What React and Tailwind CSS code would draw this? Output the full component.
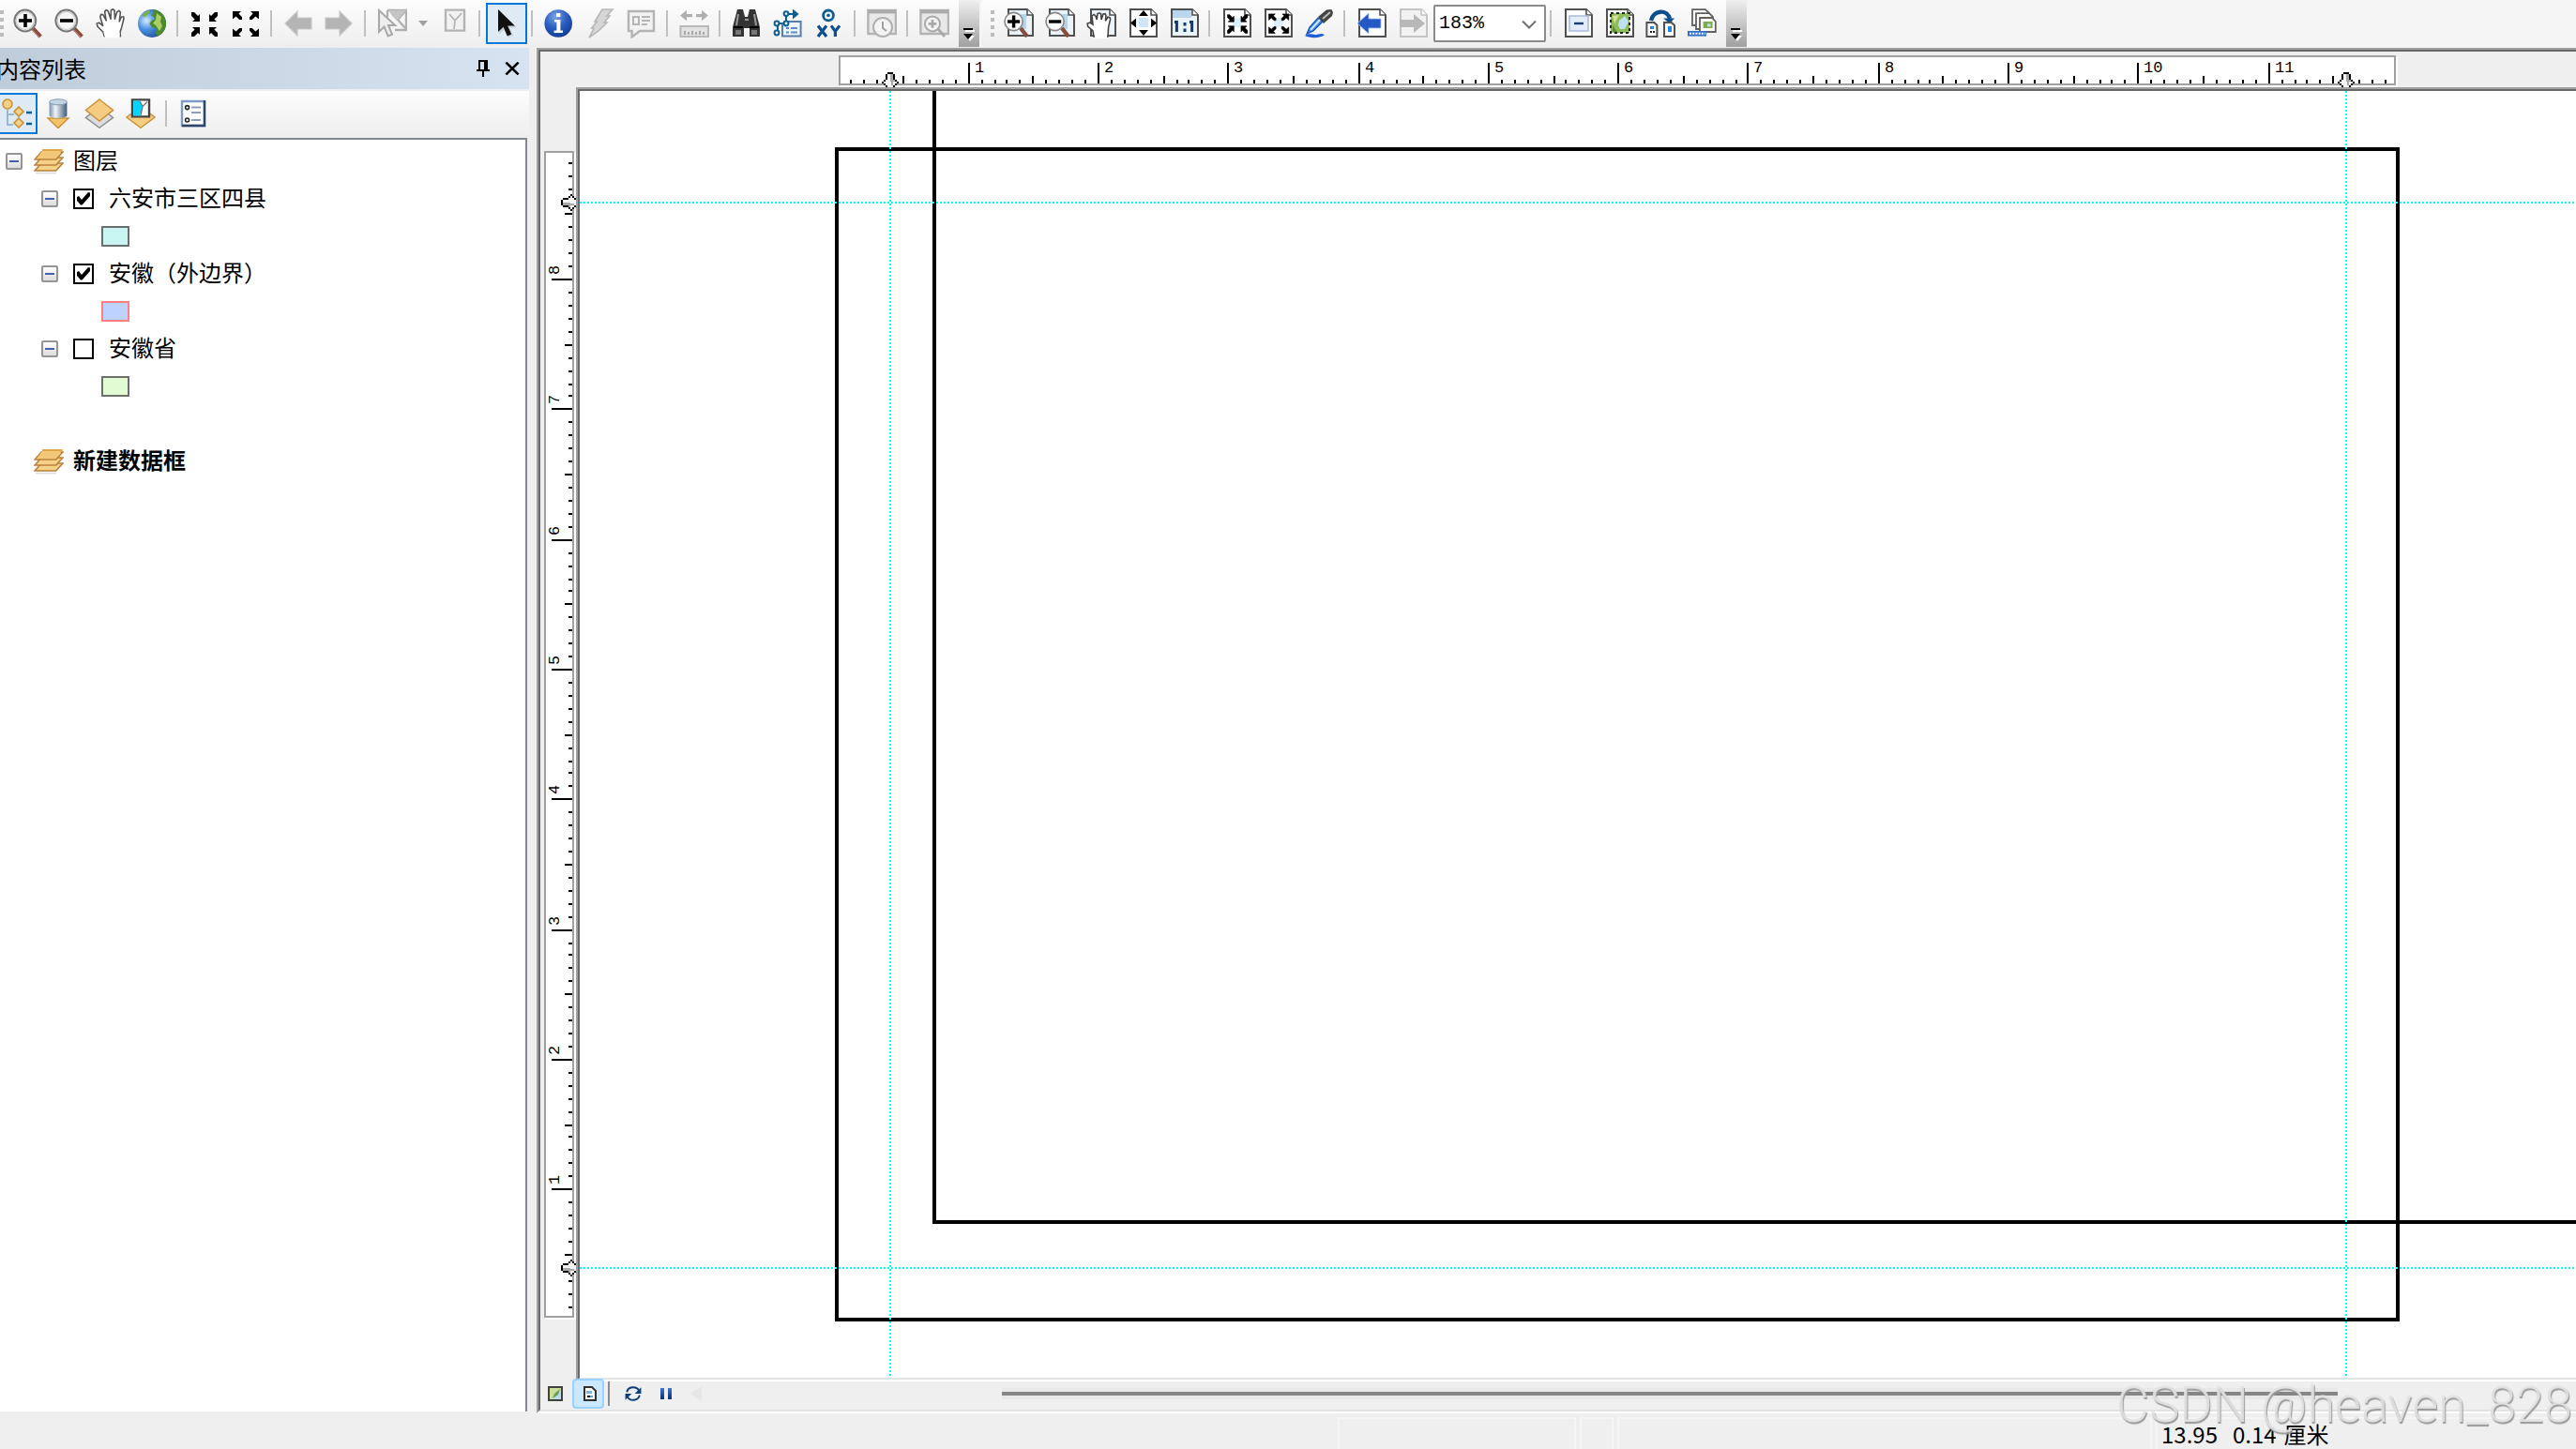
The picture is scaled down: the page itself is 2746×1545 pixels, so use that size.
import { useState } from "react";
import clsx from "clsx";

/* ---------- toolbar icons, all on a 16 x 16 grid ---------- */

const Svg = ({ children, className = "w-8 h-8" }) => (
  <svg viewBox="0 0 16 16" className={clsx("block shrink-0", className)} fill="none" aria-hidden="true">
    {children}
  </svg>
);

const Magnifier = ({ plus }) => (
  <Svg>
    <path d="M10.6 10.8 14.6 15" stroke="#8a4a3c" strokeWidth="2.2" />
    <path d="M10.4 11.6 13.8 15.2" stroke="#c08878" strokeWidth=".6" />
    <circle cx="6.4" cy="6.5" r="5.7" fill="#f6f6f6" stroke="#777" strokeWidth="1" />
    <circle cx="6.4" cy="6.5" r="4.8" stroke="#ccc" strokeWidth=".6" />
    <path d="M3 6.5h7" stroke="#000" strokeWidth="1.8" />
    {plus && <path d="M6.5 3v7" stroke="#000" strokeWidth="1.8" />}
  </Svg>
);

const HAND =
  "M4.6 14.8 4 12.6 1 9.6.6 8l1.2-.4 2 1.6L2.4 4.4l.4-1.2 1.2.2L5.6 6.4 4.8 1.6l.8-.8 1 .6L8 5.6 8.2 1 9 .4l1 .6.2 4.6 1.2-3.8 1-.6.8.8-.6 5 1-2.4 1.2-.2.2 1-1.2 4.8-.8 2.4.2 2.2z";

const Hand = () => (
  <Svg>
    <path d={HAND} fill="#fff" stroke="#555" strokeWidth=".8" strokeLinejoin="round" />
    <path d="M4.2 12.6h8.6v3H5z" fill="#fff" />
  </Svg>
);

const Globe = () => (
  <Svg>
    <defs>
      <radialGradient id="sea" cx=".3" cy=".4" r=".8">
        <stop offset="0" stopColor="#d6ecff" />
        <stop offset=".4" stopColor="#4a90e0" />
        <stop offset="1" stopColor="#123c86" />
      </radialGradient>
    </defs>
    <circle cx="8" cy="8" r="7.5" fill="url(#sea)" />
    <path
      d="M8.500.5c4 .3 7 3.500 7 7.500 0 3-1.700 5.600-4.500 6.800L10 13.500l.6-2.700L8 10l-1.300-2L8 6.200l1.600-.4L9 4.500 7.500 3.800 9 2.500z"
      fill="#4f8a2a"
    />
    <path d="M10.500 2.500 13 4.500l-.5 2.500 1 2.500-1.500 2.500-2-3-1.500-1 1.500-2z" fill="#a9cf62" />
    <path d="M2.500 3.800 5 1.400l2-.6-.5 1.700L4 4.800z" fill="#7cb04a" />
  </Svg>
);

const IN_ARROWS =
  "M1 2h1.500l2 2 1-1V7H1.500l1.300-1.300L1 4zM15 2h-1.500l-2 2-1-1V7h4l-1.300-1.300L15 4zM1 15h1.500l2-2 1 1v-4H1.500l1.300 1.300L1 13zM15 15h-1.500l-2-2-1 1v-4h4l-1.300 1.300L15 13z";
const OUT_ARROWS =
  "M1 1.500h4.500L4.200 2.800 6 4.600V6H4.600L2.800 4.200 1 5.800zM15 1.500h-4.500l1.300 1.300L10 4.600V6h1.400l1.800-1.800L15 5.800zM1 15h4.500l-1.300-1.300L6 11.900v-1.400H4.600l-1.800 1.800L1 10.700zM15 15h-4.500l1.300-1.300-1.800-1.800v-1.400h1.400l1.800 1.800 1.800-1.600z";

const FixedZoomIn = () => (
  <Svg>
    <path d={IN_ARROWS} fill="#000" />
  </Svg>
);

const FixedZoomOut = () => (
  <Svg>
    <path d={OUT_ARROWS} fill="#000" />
  </Svg>
);

const GreyArrow = ({ flip }) => (
  <Svg>
    <path
      d={flip ? "M14.500 8 8 1.500V5H.5v6H8v3.500z" : "M1 8l6.500-6.500V5H15v6H7.500v3.500z"}
      fill="#b4b4b4"
      stroke="#c8c8c8"
      strokeWidth=".6"
    />
  </Svg>
);

const SelectFeatures = () => (
  <Svg>
    <path d="M5.500 1h10v10.500h-6M5.500 1v3.500M15 1.500l-4 4.500 4 4.500" stroke="#b0b0b0" strokeWidth="1.200" />
    <path d="M6 1h9.500L10.500 6.500 8 4z" fill="#c4c4c4" />
    <path d="M1 1v11.500l2.800-2.700 2 4.900 2.200-.9-2-4.800h3.600z" fill="#eee" stroke="#a8a8a8" />
  </Svg>
);

const ClearSelection = () => (
  <Svg>
    <path d="M3.500.800h10v11h-10z" fill="#f2f2f2" stroke="#b4b4b4" strokeWidth="1.200" />
    <path d="M5.500 3l3 3.500L8 11M8.500 6.500 12 2.500" stroke="#b4b4b4" strokeWidth=".9" />
  </Svg>
);

const Pointer = () => (
  <Svg>
    <path d="M4 1v12.800l3-2.700 2 4.500 2.600-1.200-2-4.200h4z" fill="#c9d3dc" />
    <path d="M3.500.500v12l2.800-2.600 2.100 4.800 2.200-1-2-4.400h3.800z" fill="#111" />
  </Svg>
);

const Info = () => (
  <Svg>
    <defs>
      <radialGradient id="info" cx=".4" cy=".25" r=".8">
        <stop offset="0" stopColor="#7fa6e6" />
        <stop offset=".5" stopColor="#2a5ec0" />
        <stop offset="1" stopColor="#123a90" />
      </radialGradient>
    </defs>
    <circle cx="7.600" cy="8" r="7.400" fill="url(#info)" />
    <path d="M6.500 2.500h2.200v2H6.500zM5.500 6h3.200v5.800H10V13H5.300v-1.200h1.400V7.200H5.500z" fill="#fff" />
  </Svg>
);

const Lightning = () => (
  <Svg>
    <path d="M9 .500h5.500L11.500 4H13l-3 3.500h1.500L7 12l-5 3.500 2.500-5H3.300l3-3.500H5z" fill="#d6d6d6" stroke="#b8b8b8" strokeWidth=".8" />
  </Svg>
);

const HtmlPopup = () => (
  <Svg>
    <path d="M1 1.500h13.500v10.500H7l-4.200 3.200V12H1z" fill="#f2f2f2" stroke="#b4b4b4" strokeWidth="1.200" />
    <path d="M3.500 4.500h3v4h-3zM8 4.500h4.500M8 6.500h4.500M8 8.500h3" stroke="#b4b4b4" />
  </Svg>
);

const Measure = () => (
  <Svg>
    <path d="M.5 3.800 4 1v2h3v1.600H4v2zM15.500 3.800 12 1v2H9v1.600h3v2z" fill="#b0b0b0" />
    <path d="M.7 9.500h14.800v5.500H.7z" fill="#e2e2e2" stroke="#b8b8b8" />
    <path d="M3 14v-2M5 14v-1.500M7 14v-2M9 14v-1.500M11 14v-2M13 14v-1.500" stroke="#999" strokeWidth=".8" />
  </Svg>
);

const Binoculars = () => (
  <Svg>
    <path d="M3 .500h3l1 4h1.500l1-4h3L15 10v5H9.500v-4.500h-3V15H.5v-5z" fill="#333" />
    <path d="M3.500 3 2.500 9M12 3l1 6M7 6h2" stroke="#999" />
    <path d="M2 11.500h3v2.500H2zM10.500 11.500h3v2.500h-3z" fill="#777" />
    <path d="M1 10h5M9.500 10h5" stroke="#000" />
  </Svg>
);

const FindRoute = () => (
  <Svg>
    <path d="M2.500 13.500V8h4.500V3h5" stroke="#0b5f95" />
    <path d="M10.500 .300 13.800 3l-3.300 2.700z" fill="#0b5f95" />
    <g fill="#fff" stroke="#0b5f95">
      <circle cx="2" cy="8" r="1.200" />
      <circle cx="2" cy="13" r="1.200" />
      <circle cx="7" cy="2.800" r="1.200" />
    </g>
    <path d="M5 14.800V8.500h3V7h6.800v7.800z" fill="#eef4fc" stroke="#5a7ca8" />
    <circle cx="7" cy="8" r="1.200" fill="#fff" stroke="#0b5f95" />
    <path d="M7 10.500h1.500M9.500 10.500H13M7 12.800h1.500M9.500 12.800H13" stroke="#5a8ad0" />
  </Svg>
);

const GoToXY = () => (
  <Svg>
    <circle cx="7.500" cy="3.700" r="2.700" fill="#fff" stroke="#0b5f95" strokeWidth="1.400" />
    <circle cx="7.500" cy="3.700" r=".9" fill="#0b5f95" />
    <path d="M2 9.200 6.500 15M6.500 9.200 2 15M9 9.200l2.200 3 2.300-3M11.200 12v3" stroke="#0b4f8c" strokeWidth="1.600" />
  </Svg>
);

const WindowFrame = () => (
  <>
    <path d="M.7 1h14.800v12.500H.7z" fill="#e8e8e8" stroke="#b4b4b4" strokeWidth="1.200" />
    <path d="M.7 1.800h14.800" stroke="#aaa" strokeWidth="1.800" />
  </>
);

const TimeSlider = () => (
  <Svg>
    <WindowFrame />
    <circle cx="8.500" cy="10" r="5" fill="#f4f4f4" stroke="#b0b0b0" />
    <path d="M8.500 7v3.500l2 1.500" stroke="#a0a0a0" />
  </Svg>
);

const ViewerWindow = () => (
  <Svg>
    <WindowFrame />
    <circle cx="7" cy="8.200" r="4" fill="#f4f4f4" stroke="#aaa" />
    <path d="M7 6v4.400M4.800 8.200h4.400M10 11l3.500 4" stroke="#aaa" strokeWidth="1.400" />
  </Svg>
);

/* sheet of paper with a folded corner, shared by the layout tools */
const Sheet = ({ stroke = "#505050", fill = "#fff" }) => (
  <>
    <path d="M1.500.500h11l3 3V15h-14z" fill={fill} stroke={stroke} />
    <path d="M12.500.500v3h3" fill="#fff" stroke={stroke} strokeWidth=".8" />
  </>
);

const LayoutMagnifier = ({ plus }) => (
  <Svg>
    <path d="M2.500.500h10l3 3V14.500h-13z" fill="#eaf3fa" stroke="#505050" />
    <path d="M12.500.500v3h3" fill="#fff" stroke="#505050" strokeWidth=".8" />
    <path d="M9 3h3v8H9z" fill="#b4d6ec" />
    <path d="M9 10.500 12.500 15" stroke="#8a4a3c" strokeWidth="2.200" />
    <circle cx="5.300" cy="7" r="4.800" fill="#fafafa" stroke="#888" strokeWidth=".8" />
    <path d="M2 7h6.600" stroke="#000" strokeWidth="1.700" />
    {plus && <path d="M5.300 3.700v6.600" stroke="#000" strokeWidth="1.700" />}
  </Svg>
);

const LayoutPan = () => (
  <Svg>
    <path d="M2.500.500h10l3 3V14.500h-13z" fill="#eaf3fa" stroke="#505050" />
    <path d="M12.500.500v3h3" fill="#fff" stroke="#505050" strokeWidth=".8" />
    <path
      d="M4 15 3.500 12 .8 9.500.6 8 2 7.600l1.500 1L3 4l1-.8L5 4l.6 2L6 2.800l1-.4.8.6.2 3L9 3l1-.2.5 1-.3 2.800 1.300-2 1 .2.300 1-1 4.200-.3 5z"
      fill="#fff"
      stroke="#444"
      strokeWidth=".8"
    />
    <path d="M4.500 12h6.500v4H4.500z" fill="#fff" />
  </Svg>
);

const WholePage = () => (
  <Svg>
    <Sheet />
    <path d="M6 5h5v5H6z" fill="#cfe6f8" />
    <path d="M8.500 1 11 4H6zM8.500 14.500 11 11.500H6zM1.500 7.800l3-2.500v5zM15.500 7.800l-3-2.500v5z" fill="#000" />
  </Svg>
);

const ActualSize = () => (
  <Svg>
    <Sheet fill="#eaf3fa" />
    <path d="M2 1h10v4H2z" fill="#b9d6ee" />
    <path d="M4.200 6.500v6M3 7.200h1.500M12.300 6.500v6M11 7.200h1.500M8.500 7.500v1.700M8.500 10.800v1.700" stroke="#123c70" strokeWidth="1.500" />
  </Svg>
);

const LayoutFixed = ({ out }) => (
  <Svg>
    <Sheet />
    <path d="M6 5h5v5H6z" fill="#dceefa" />
    <g transform="translate(2.500 1.800) scale(.76)">
      <path d={out ? OUT_ARROWS : IN_ARROWS} fill="#000" stroke="#000" strokeWidth=".4" />
    </g>
  </Svg>
);

const Brush = () => (
  <Svg>
    <path d="M.5 14.500c2.500-1.500 4-.5 5.500-.5s3-1.200 5 0c-2 2-8 2-10.500.5z" fill="#1f5fd6" />
    <path d="M1.500 13.500 3 10l4.500-5L10 7l-5 5z" fill="#3a8ae8" stroke="#1b4fb0" strokeWidth=".6" />
    <path d="M3.500 11.500 8.500 6" stroke="#cfe6ff" />
    <path d="M7.500 4.500 12 .8l2.600-.3.900 1.500-.5 2L10.500 8z" fill="#444" />
    <path d="M10 5.500 14 2" stroke="#bbb" />
  </Svg>
);

const ExtentArrow = ({ forward }) => (
  <Svg>
    <Sheet stroke={forward ? "#c4c4c4" : "#505050"} fill={forward ? "#f2f2f2" : "#fff"} />
    {forward ? (
      <path d="M14.500 8 8.500 3v3H1v4h7.500v3z" fill="#b8b8b8" />
    ) : (
      <path d="M.5 8l6-5.500v3h6.500v5H6.500v3z" fill="#2458c4" stroke="#a8c4f0" strokeWidth=".4" />
    )}
  </Svg>
);

const DraftMode = () => (
  <Svg>
    <Sheet />
    <path d="M3.500 4h10v8h-10z" fill="#e2ecfa" stroke="#a9bcd8" strokeWidth=".8" />
    <path d="M6 8h5" stroke="#1c3e78" strokeWidth="1.200" />
  </Svg>
);

const FocusFrame = () => (
  <Svg>
    <Sheet />
    <path d="M3.500 2.500h10v10.500h-10z" fill="#8fbc5c" stroke="#222" strokeDasharray="1.500 1.500" />
    <path d="M8 6.500l3-2.500 2 3-2 4H8.500l-1-2z" fill="#bfe0ee" />
    <path d="M4.500 4 8 3.500 5.500 8z" fill="#d2e49a" />
    <path d="M4.500 9 7 12.500H4.500z" fill="#5f8f38" />
  </Svg>
);

const ChangeLayout = () => (
  <Svg>
    <path d="M3 6.500C4 1 11.500 0 13 5.500" stroke="#0b4f8c" strokeWidth="2.200" />
    <path d="M9.500 5.200h6L13 8z" fill="#0b4f8c" />
    <path d="M.7 7.500h4l1.500 1.500v6H.7zM10 7.500h3.800L15.500 9v6H10z" fill="#fff" stroke="#505050" />
    <path d="M2.500 9.500h2V11h-2zM12 9.500h2v3h-2z" fill="#1f86e8" />
    <path d="M2.500 12.500h1M4 12.500h1" stroke="#222" />
  </Svg>
);

const DataDrivenPages = () => (
  <Svg>
    <path d="M3 .600h7l2 2V9H3z" fill="#fff" stroke="#606060" strokeWidth=".9" />
    <path d="M5 2.600h7l2 2V11H5z" fill="#fff" stroke="#606060" strokeWidth=".9" />
    <path d="M7 5h6.500L15.400 7v5.500H7z" fill="#fff" stroke="#606060" strokeWidth=".9" />
    <path d="M8.800 7h5v3.500h-5z" fill="#7fae4c" />
    <path d="M11 8.200h1.800v1.500H11z" fill="#bfe0ee" />
    <path d="M.5 12h10v2.800H.5z" fill="#2f6fd0" />
    <path d="M1.500 13.400h8.500" stroke="#fff" strokeDasharray="1 .6" />
  </Svg>
);

const ListByDrawingOrder = () => (
  <Svg>
    <path d="M3 6v8h3M3 8.500h3.500" stroke="#9ab6d0" />
    <g fill="#f7d083" stroke="#c8913c" strokeWidth=".8">
      <circle cx="3" cy="3" r="2.500" />
      <path d="M9 4.500 11.500 7 9 9.500 6.500 7zM9 10.500l2.500 2.500L9 15.500 6.500 13z" />
    </g>
    <path d="M13 7.500h3M13 13.500h3" stroke="#0b5f95" strokeWidth="1.200" />
  </Svg>
);

const ListBySource = () => (
  <Svg>
    <defs>
      <linearGradient id="drum">
        <stop offset="0" stopColor="#7990ad" />
        <stop offset=".35" stopColor="#f0f5fa" />
        <stop offset="1" stopColor="#3f5878" />
      </linearGradient>
    </defs>
    <path d="M2.500 10.500h11L8 15.800z" fill="#f3c566" stroke="#c8913c" strokeWidth=".7" />
    <path d="M3.300 1.800v7.400c1 1.500 8.400 1.500 9.400 0V1.800z" fill="url(#drum)" />
    <ellipse cx="8" cy="1.900" rx="4.700" ry="1.500" fill="#c5d4e4" stroke="#8199b4" strokeWidth=".5" />
  </Svg>
);

const ListByVisibility = () => (
  <Svg>
    <path d="M8 4.500 15.300 10.200 8 15.600.7 10.200z" fill="#ddd" stroke="#8c8c8c" strokeWidth=".7" />
    <path d="M8 .500 15.300 6.200 8 12 .7 6.200z" fill="#f6cd80" stroke="#c8913c" strokeWidth=".7" />
  </Svg>
);

const ListBySelection = () => (
  <Svg>
    <path d="M8 4.500 15.500 10 8 15.600.5 10z" fill="#f6cd80" stroke="#c8913c" strokeWidth=".7" />
    <path d="M3.500.700h9v9h-9z" fill="#fff" stroke="#444" strokeWidth="1.200" />
    <path d="M4.100 1.300h3.400l1.500 2.900-1.500 4.900H4.100z" fill="#00d5ff" />
    <path d="M7.500 1.500 9 4.200 8 9M9 4.200l2.500-2.500" stroke="#777" strokeWidth=".7" />
  </Svg>
);

const Options = () => (
  <Svg>
    <path d="M2 1.500h12v13H2z" fill="#fff" stroke="#7f9bc6" strokeWidth="1.200" />
    <path d="M14 1v13.500H2" stroke="#2e4468" strokeWidth="1.200" />
    <circle cx="4.800" cy="4.800" r="1" stroke="#222" strokeWidth=".8" />
    <circle cx="4.800" cy="11.500" r="1" stroke="#222" strokeWidth=".8" />
    <path d="M7 4.800h5M7 7.500h5M7 11.500h5" stroke="#8c9fba" />
  </Svg>
);

const Layers = () => (
  <Svg>
    {[13, 10, 7].map((y) => (
      <path
        key={y}
        d={`M.6 ${y} 4 ${y - 4}h11.500L11.800 ${y}z`}
        fill="#f6d187"
        stroke="#b9803c"
        strokeWidth=".8"
      />
    ))}
    <path d="M1.600 6.500 5 1.800h10.300L11.800 6.500z" fill="#f2c878" />
    <path d="M4.500 2h10.800" stroke="#d79c3c" strokeWidth=".8" />
    <path d="M1 14.300h11" stroke="#ddd" strokeWidth=".8" />
  </Svg>
);

/* ---------- toolbar parts ---------- */

const ToolButton = ({ label, icon, active }) => (
  <button
    type="button"
    aria-label={label}
    className={clsx(
      "flex h-11 w-11 shrink-0 items-center justify-center",
      active && "border-2 border-[#0078d7] bg-[#deebf5]"
    )}
  >
    {icon}
  </button>
);

const Separator = () => <div className="mr-1.5 ml-1 h-7 w-0.5 shrink-0 bg-[#c0c0c0]" />;

const Grip = () => (
  <div className="flex shrink-0 flex-col gap-1">
    {[0, 1, 2, 3].map((i) => (
      <span key={i} className="block h-1 w-1 bg-[#bdbdbd]" />
    ))}
  </div>
);

const Overflow = () => (
  <button
    type="button"
    aria-label="Toolbar options"
    className="ml-1 flex w-[22px] shrink-0 items-end justify-center self-stretch bg-linear-to-b from-[#f0f0f0] to-[#a0a0a0] pb-1.5"
  >
    <svg viewBox="0 0 6 7" className="h-3.5 w-3" aria-hidden="true">
      <path d="M1 1h5v1H1zM1 4h5L3.500 7z" fill="#fff" />
      <path d="M0 0h5v1H0zM0 3h5L2.500 6z" fill="#000" />
    </svg>
  </button>
);

const Tools = ({ items }) =>
  items.map((item, i) =>
    item === "|" ? (
      <Separator key={i} />
    ) : (
      <ToolButton key={i} label={item[0]} icon={item[1]} active={item[2]} />
    )
  );

const navTools = [
  ["Zoom in", <Magnifier plus />],
  ["Zoom out", <Magnifier />],
  ["Pan", <Hand />],
  ["Full extent", <Globe />],
  "|",
  ["Fixed zoom in", <FixedZoomIn />],
  ["Fixed zoom out", <FixedZoomOut />],
  "|",
  ["Previous extent", <GreyArrow />],
  ["Next extent", <GreyArrow flip />],
  "|",
  ["Select features", <SelectFeatures />],
];

const queryTools = [
  ["Clear selection", <ClearSelection />],
  "|",
  ["Select elements", <Pointer />, true],
  "|",
  ["Identify", <Info />],
  ["Hyperlink", <Lightning />],
  ["HTML popup", <HtmlPopup />],
  "|",
  ["Measure", <Measure />],
  "|",
  ["Find", <Binoculars />],
  ["Find route", <FindRoute />],
  ["Go to XY", <GoToXY />],
  "|",
  ["Time slider", <TimeSlider />],
  "|",
  ["Viewer window", <ViewerWindow />],
];

const layoutTools = [
  ["Layout zoom in", <LayoutMagnifier plus />],
  ["Layout zoom out", <LayoutMagnifier />],
  ["Layout pan", <LayoutPan />],
  ["Whole page", <WholePage />],
  ["Actual size", <ActualSize />],
  "|",
  ["Layout fixed zoom in", <LayoutFixed />],
  ["Layout fixed zoom out", <LayoutFixed out />],
  ["Brush", <Brush />],
  "|",
  ["Back", <ExtentArrow />],
  ["Forward", <ExtentArrow forward />],
];

const pageTools = [
  "|",
  ["Draft mode", <DraftMode />],
  ["Focus data frame", <FocusFrame />],
  ["Change layout", <ChangeLayout />],
  ["Data driven pages", <DataDrivenPages />],
];

function ToolbarRow() {
  return (
    <div className="flex h-[51px] shrink-0 bg-[#f5f5f5]">
      <div className="flex items-center bg-linear-to-b from-[#fdfdfd] to-[#eeeeee] pb-px">
        <div className="mr-1">
          <Grip />
        </div>
        <Tools items={navTools} />
        <button type="button" aria-label="Select by" className="flex w-[22px] shrink-0 justify-center">
          <svg viewBox="0 0 10 6" className="h-1.5 w-2.5" aria-hidden="true">
            <path d="M0 0h10L5 6z" fill="#a0a0a0" />
          </svg>
        </button>
        <Tools items={queryTools} />
        <Overflow />
      </div>
      <div className="ml-0.5 flex items-center rounded-l bg-linear-to-b from-[#fdfdfd] to-[#eeeeee] pb-px pl-2.5">
        <div className="mr-1">
          <Grip />
        </div>
        <Tools items={layoutTools} />
        <div className="relative w-[120px] shrink-0">
          <select
            aria-label="Zoom"
            defaultValue="183%"
            className="block h-10 w-full appearance-none rounded-xs border-2 border-[#8a8a8a] bg-white pl-1 font-['Liberation_Mono',monospace] text-xl leading-8 text-black"
          >
            <option>183%</option>
            <option>100%</option>
          </select>
          <svg viewBox="0 0 16 9" className="pointer-events-none absolute top-4 right-2.5 h-2.5 w-4" fill="none" aria-hidden="true">
            <path d="m1 1 7 7 7-7" stroke="#707070" strokeWidth="2" />
          </svg>
        </div>
        <Tools items={pageTools} />
        <Overflow />
      </div>
    </div>
  );
}

/* ---------- table of contents ---------- */

const Expander = () => (
  <button
    type="button"
    aria-label="Collapse"
    className="flex h-[18px] w-[18px] shrink-0 items-center justify-center rounded-xs border-2 border-[#959595] bg-linear-to-b from-white to-[#dcdcdc]"
  >
    <span className="block h-0.5 w-2.5 bg-[#4560aa]" />
  </button>
);

const initialLayers = [
  { id: "luan", name: "六安市三区四县", on: true, swatch: "border-[#6e6e6e] bg-[#c8f5f1]" },
  { id: "border", name: "安徽（外边界）", on: true, swatch: "border-[#ff7f7f] bg-[#bed2ff]" },
  { id: "anhui", name: "安徽省", on: false, swatch: "border-[#6e6e6e] bg-[#e3fbd3]" },
];

function Contents() {
  const [layers, setLayers] = useState(initialLayers);

  const toggle = (id) =>
    setLayers(layers.map((l) => (l.id === id ? { ...l, on: !l.on } : l)));

  return (
    <aside className="flex w-[564px] shrink-0 flex-col overflow-hidden">
      <div className="flex h-11 shrink-0 items-center bg-linear-to-r from-[#bfcddb] to-[#d6e3f1]">
        <h2 className="-ml-1 flex-1">内容列表</h2>
        <button type="button" aria-label="Auto hide" className="mr-4">
          <svg viewBox="0 0 7 9" className="h-[18px] w-3.5" aria-hidden="true" shapeRendering="crispEdges">
            <path d="M1 0h5v5h1v1H4v3H3V6H0V5h1zM2 1v4h2V1z" fill="#000" fillRule="evenodd" />
          </svg>
        </button>
        <button type="button" aria-label="Close" className="mr-2.5">
          <svg viewBox="0 0 8 7" className="h-3.5 w-4" aria-hidden="true">
            <path d="m.700.300 6.600 6.400M7.300.300.700 6.700" stroke="#000" strokeWidth="1.300" />
          </svg>
        </button>
      </div>
      <div className="mt-0.5 flex h-[50px] shrink-0 items-center bg-linear-to-b from-[#fdfdfd] to-[#eeeeee] pb-0.5">
        <div className="-ml-1 flex items-center">
          <ToolButton label="List by drawing order" icon={<ListByDrawingOrder />} active />
          <ToolButton label="List by source" icon={<ListBySource />} />
          <ToolButton label="List by visibility" icon={<ListByVisibility />} />
          <ToolButton label="List by selection" icon={<ListBySelection />} />
          <Separator />
          <ToolButton label="Options" icon={<Options />} />
        </div>
      </div>
      <div className="mr-0.5 mb-0.5 flex-1 border-t-2 border-r-2 border-[#838790] bg-white pt-[3px]">
        <div className="flex h-10 items-center pl-1.5">
          <Expander />
          <span className="mr-2.5 ml-3">
            <Layers />
          </span>
          <span className="pb-1">图层</span>
        </div>
        {layers.map((l) => (
          <div key={l.id}>
            <div className="flex h-10 items-center pl-11">
              <Expander />
              <span className="relative mr-4 ml-4 flex">
                <input
                  type="checkbox"
                  id={l.id}
                  checked={l.on}
                  onChange={() => toggle(l.id)}
                  className="h-[22px] w-[22px] appearance-none border-2 border-black bg-white"
                />
                {l.on && (
                  <svg viewBox="0 0 11 11" className="pointer-events-none absolute inset-0 h-[22px] w-[22px]" aria-hidden="true">
                    <path d="M2 4.500 3 4l1.500 2L8 2l1 .2V4L4.800 8.800H4L2 6.500z" fill="#000" />
                  </svg>
                )}
              </span>
              <label htmlFor={l.id} className="pb-1">
                {l.name}
              </label>
            </div>
            <div className="flex h-10 items-center pl-27">
              <span className={clsx("h-[22px] w-[30px] border-2", l.swatch)} />
            </div>
          </div>
        ))}
        <div className="mt-10 flex h-10 items-center pl-9 font-bold">
          <span className="mr-2.5">
            <Layers />
          </span>
          <span className="pb-1">新建数据框</span>
        </div>
      </div>
    </aside>
  );
}

/* ---------- layout view ---------- */

// one tenth of a ruler unit covers 6.93 device dots, each dot is 2px
const DOT = 6.93;
const hTick = (k) => 2 * Math.floor(k * DOT + 446.85) - 896;
const vTick = (k) => 2 * Math.ceil(702.02 - k * DOT) - 162;
const tickSize = (k) => (k % 10 === 0 ? 22 : k % 5 === 0 ? 8 : 4);
const range = (n) => Array.from({ length: n }, (_, i) => i + 1);

const GUIDES_X = [331, 1883];
const GUIDES_Y = [119, 1255];

const GuideMarker = ({ transform }) => (
  <g transform={transform} shapeRendering="crispEdges">
    <path d="M-3-13h6v6h2v2h2v2h-2v2h-2v2h-6v-2h-2v-2h-2v-2h2v-2h2z" fill="#f4f4f4" />
    <path d="M0-13h3v6h2v2h-2v4h-2v-4h-1z" fill="#a8a8a8" />
    <path
      d="M-3-15h6v2h-6zM-5-13h2v6h-2zM3-13h2v6h-2zM-7-7h2v2h-2zM5-7h2v2h-2zM-9-5h2v2h-2zM7-5h2v2h-2zM-7-3h2v2h-2zM5-3h2v2h-2zM-5-1h2v2h-2zM3-1h2v2h-2z"
      fill="#000"
    />
  </g>
);

const RULER_TEXT = "font-['Liberation_Mono',monospace] text-[17px]";

function HorizontalRuler() {
  return (
    <div className="h-8 w-[1660px] shrink-0 border-2 border-[#a0a0a0] bg-white shadow-[2px_2px_0_#fff]">
      <svg className="block h-full w-full overflow-visible">
        {range(119).map((k) => (
          <rect key={k} x={hTick(k)} y={28 - tickSize(k)} width="2" height={tickSize(k)} />
        ))}
        {range(11).map((n) => (
          <text key={n} x={hTick(n * 10) + 7} y="16" className={RULER_TEXT}>
            {n}
          </text>
        ))}
        {GUIDES_X.map((x) => (
          <GuideMarker key={x} transform={`translate(${x - 278} 31)`} />
        ))}
      </svg>
    </div>
  );
}

function VerticalRuler() {
  return (
    <div className="h-[1244px] w-8 shrink-0 border-2 border-[#a0a0a0] bg-white shadow-[2px_2px_0_#fff]">
      <svg className="block h-full w-full overflow-visible">
        {range(89).map((k) => (
          <rect key={k} x={28 - tickSize(k)} y={vTick(k)} width={tickSize(k)} height="2" />
        ))}
        {range(8).map((n) => (
          <text key={n} transform={`translate(14 ${vTick(n * 10) - 4}) rotate(-90)`} className={RULER_TEXT}>
            {n}
          </text>
        ))}
        {GUIDES_Y.map((y) => (
          <GuideMarker key={y} transform={`translate(31 ${y - 66}) rotate(-90) scale(-1 1)`} />
        ))}
      </svg>
    </div>
  );
}

function Page() {
  return (
    <svg className="block h-full w-full" fill="none" shapeRendering="crispEdges">
      <rect x="274" y="62" width="1664" height="1248" stroke="#000" strokeWidth="4" />
      <rect x="378" y="-10" width="4000" height="1216" stroke="#000" strokeWidth="4" />
      <g stroke="#00ffff" strokeWidth="2" strokeDasharray="2 2">
        {GUIDES_X.map((x) => (
          <line key={x} x1={x} x2={x} y1="0" y2="100%" />
        ))}
        {GUIDES_Y.map((y) => (
          <line key={y} x1="0" x2="100%" y1={y} y2={y} />
        ))}
      </g>
    </svg>
  );
}

function ViewBar() {
  return (
    <div className="flex h-[30px] shrink-0 items-center pb-1">
      <button type="button" aria-label="Data view" className="ml-2">
        <Svg className="h-4 w-4">
          <path d="M1 1h14v14H1z" fill="#c8df9a" stroke="#404040" strokeWidth="2" />
          <path d="M14 4v10H6l2-4z" fill="#b4dcec" />
          <path d="M5 13 7 8l6-5-2 6z" fill="#6f9a4c" />
        </Svg>
      </button>
      <button
        type="button"
        aria-label="Layout view"
        className="ml-2.5 flex h-8 w-[34px] shrink-0 items-center justify-center rounded border-2 border-[#99d1ff] bg-[#cce8ff] pl-1"
      >
        <Svg className="h-4 w-4">
          <path d="M2 1h8l4 4v10H2z" fill="#fff" stroke="#303030" strokeWidth="2" />
          <path d="M4 5h6v3H4z" fill="#7fb4dc" />
          <path d="M5 11h3" stroke="#000" strokeWidth="2" />
          <path d="M8 11h3" stroke="#30b0ff" strokeWidth="2" />
        </Svg>
      </button>
      <div className="ml-1 h-[26px] w-0.5 bg-[#8a8a8a]" />
      <button type="button" aria-label="Refresh" className="ml-4">
        <Svg className="h-[18px] w-[18px]">
          <path d="M2 6.500C3 1 11 .500 13.500 5M14 9.500C13 15 5 15.500 2.500 11" stroke="#0b3f7c" strokeWidth="1.800" />
          <path d="M15.500 2v6h-6zM.5 14V8h6z" fill="#0b3f7c" />
        </Svg>
      </button>
      <button type="button" aria-label="Pause drawing" className="ml-5 flex gap-1">
        <span className="block h-3 w-1 bg-linear-to-b from-[#3f74d8] to-[#08306c]" />
        <span className="block h-3 w-1 bg-linear-to-b from-[#3f74d8] to-[#08306c]" />
      </button>
      <button type="button" aria-label="Scroll left" className="ml-5">
        <svg viewBox="0 0 12 16" className="h-4 w-3" aria-hidden="true">
          <path d="M12 0v16L0 8z" fill="#e6e6e6" />
        </svg>
      </button>
      <div className="mr-[254px] ml-80 flex h-3 flex-1 items-center bg-[#e8e8e8]">
        <div className="h-1 w-full bg-[#868686]" />
      </div>
    </div>
  );
}

function LayoutView() {
  return (
    <main className="ml-2 flex min-w-0 flex-1 flex-col border-t-2 border-b-2 border-l-2 border-t-[#a0a0a0] border-b-white border-l-[#a0a0a0]">
      <div className="flex min-h-0 flex-1 flex-col border-t-2 border-b-2 border-l-2 border-t-[#696969] border-b-[#e3e3e3] border-l-[#696969]">
        <div className="flex h-[38px] shrink-0 pt-1 pl-[318px]">
          <HorizontalRuler />
        </div>
        <div className="flex min-h-0 flex-1">
          <div className="w-[38px] shrink-0 pt-17 pl-1">
            <VerticalRuler />
          </div>
          <div className="min-w-0 flex-1 border-t-2 border-b-2 border-l-2 border-t-[#a0a0a0] border-b-white border-l-[#a0a0a0]">
            <div className="h-full overflow-hidden border-t-2 border-b-2 border-l-2 border-t-[#696969] border-b-[#e3e3e3] border-l-[#696969] bg-white">
              <Page />
            </div>
          </div>
        </div>
        <ViewBar />
      </div>
    </main>
  );
}

function StatusBar() {
  return (
    <footer className="flex h-[38px] shrink-0 gap-1 pt-1">
      <div className="flex-1" />
      <div className="w-[254px] border-2 border-b-0 border-[#f5f5f5]" />
      <div className="w-9 border-2 border-b-0 border-[#f5f5f5]" />
      <div className="w-[570px] border-2 border-b-0 border-[#f5f5f5]" />
      <div className="flex w-[448px] border-t-2 border-l-2 border-[#f5f5f5] pl-1 leading-8">
        <span className="mr-4">13.95</span>
        <span className="mr-2">0.14</span>
        <span>厘米</span>
      </div>
    </footer>
  );
}

export default function App() {
  return (
    <div className="relative flex h-screen flex-col overflow-hidden bg-[#efefef] font-['Noto_Sans_CJK_SC',sans-serif] text-2xl text-black">
      <ToolbarRow />
      <div className="flex min-h-0 flex-1">
        <Contents />
        <LayoutView />
      </div>
      <StatusBar />
      <div className="pointer-events-none absolute right-1 bottom-5 font-['Roboto',sans-serif] text-[54px] leading-none font-light text-[#e2e2e2]/90 [text-shadow:1px_2px_1px_#9a9a9a]">
        CSDN @heaven_828
      </div>
    </div>
  );
}
